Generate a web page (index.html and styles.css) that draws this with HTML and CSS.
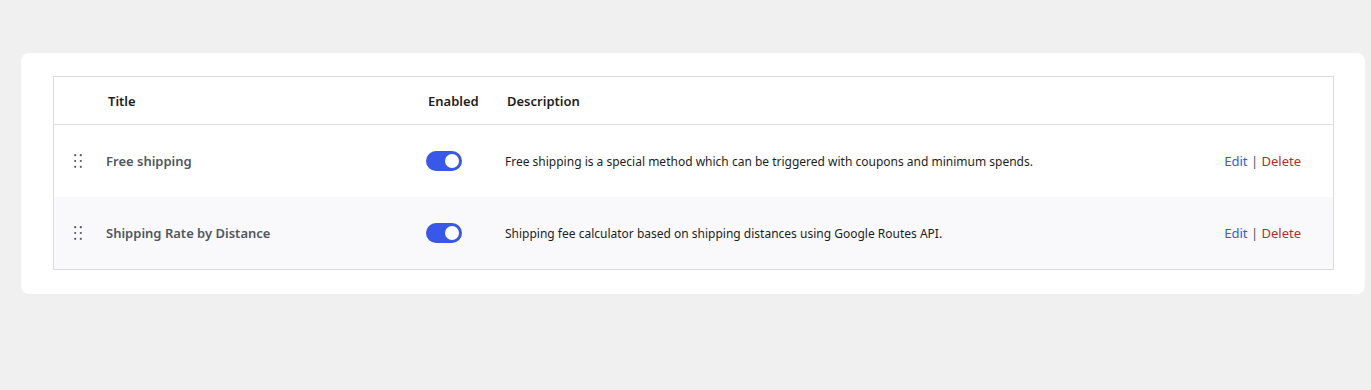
FILE: index.html
```html
<!DOCTYPE html>
<html>
<head>
<meta charset="utf-8">
<link rel="stylesheet" href="styles.css">
</head>
<body>
<div class="card">
  <table class="methods">
    <thead>
      <tr>
        <th class="col-handle"></th>
        <th class="col-title">Title</th>
        <th class="col-enabled">Enabled</th>
        <th class="col-desc">Description</th>
        <th class="col-actions"></th>
      </tr>
    </thead>
    <tbody>
      <tr>
        <td class="col-handle"><span class="handle"><svg width="8" height="14" viewBox="0 0 8 14"><circle cx="1.2" cy="1.2" r="1.1"/><circle cx="6.8" cy="1.2" r="1.1"/><circle cx="1.2" cy="7" r="1.1"/><circle cx="6.8" cy="7" r="1.1"/><circle cx="1.2" cy="12.8" r="1.1"/><circle cx="6.8" cy="12.8" r="1.1"/></svg></span></td>
        <td class="col-title name">Free shipping</td>
        <td class="col-enabled"><span class="toggle"><span class="knob"></span></span></td>
        <td class="col-desc desc">Free shipping is a special method which can be triggered with coupons and minimum spends.</td>
        <td class="col-actions actions"><a class="edit">Edit</a> <span class="sep">|</span> <a class="delete">Delete</a></td>
      </tr>
      <tr class="alt">
        <td class="col-handle"><span class="handle"><svg width="8" height="14" viewBox="0 0 8 14"><circle cx="1.2" cy="1.2" r="1.1"/><circle cx="6.8" cy="1.2" r="1.1"/><circle cx="1.2" cy="7" r="1.1"/><circle cx="6.8" cy="7" r="1.1"/><circle cx="1.2" cy="12.8" r="1.1"/><circle cx="6.8" cy="12.8" r="1.1"/></svg></span></td>
        <td class="col-title name">Shipping Rate by Distance</td>
        <td class="col-enabled"><span class="toggle"><span class="knob"></span></span></td>
        <td class="col-desc desc">Shipping fee calculator based on shipping distances using Google Routes API.</td>
        <td class="col-actions actions"><a class="edit">Edit</a> <span class="sep">|</span> <a class="delete">Delete</a></td>
      </tr>
    </tbody>
  </table>
</div>
</body>
</html>
```
FILE: styles.css
```css
html, body {
  margin: 0;
  padding: 0;
  background: #f0f0f1;
  font-family: "Noto Sans", "Open Sans", sans-serif;
  color: #1e1e1e;
}
body {
  padding: 53px 6px 0 21px;
}
.card {
  background: #fff;
  border-radius: 8px;
  padding: 23px 31px 24px 32px;
}
.methods {
  width: 100%;
  table-layout: fixed;
  border-collapse: collapse;
  border: 1px solid #dcdcde;
}
.methods th {
  height: 46px;
  text-align: left;
  font-size: 13px;
  font-weight: 600;
  color: #1e1e1e;
  padding: 1px 0 0 0;
  border-bottom: 1px solid #e0e0e0;
}
.methods td {
  height: 72px;
  padding: 0;
  vertical-align: middle;
}
.methods tr.alt td {
  background: #f9f9fb;
}
.col-handle { width: 52px; }
.methods th.col-title { padding-left: 2px; }
.col-title { width: 318px; }
.col-enabled { width: 77px; }
.methods th.col-enabled { padding-left: 2px; }
.methods th.col-desc { padding-left: 2px; }
.col-actions { width: 200px; }
.handle {
  display: flex;
  margin-left: 20px;
  fill: #50575e;
}
.name {
  font-size: 13px;
  font-weight: 600;
  color: #50575e;
}
.toggle {
  display: flex;
  align-items: center;
  width: 36px;
  height: 20px;
  border-radius: 10px;
  background: #3858e9;
  justify-content: flex-end;
  box-sizing: border-box;
  padding-right: 3px;
}
.knob {
  width: 14px;
  height: 14px;
  border-radius: 50%;
  background: #fff;
}
.desc {
  font-size: 12px;
  color: #1e1e1e;
}
.actions {
  text-align: right;
  padding-right: 32px !important;
  font-size: 13px;
}
.edit { color: #3858e9; }
.delete { color: #b32d2e; }
.sep { color: #50575e; }
```
